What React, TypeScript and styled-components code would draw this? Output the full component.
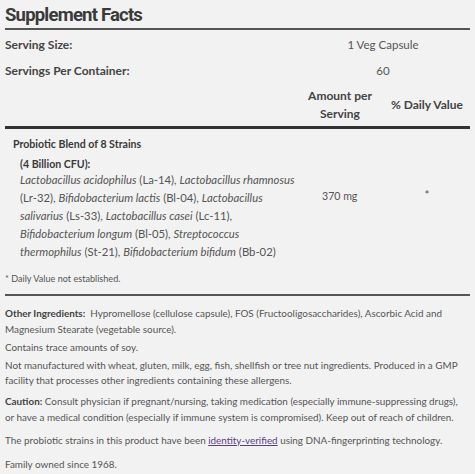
import React from 'react'
import styled, { createGlobalStyle } from 'styled-components'

const Global = createGlobalStyle`
  body {
    margin: 0;
    background: #f2f2f2;
  }
`

const App = () => {
  return (
    <Page>
      <Global />
      <Title>Supplement Facts</Title>
      <Table>
        <colgroup>
          <col />
          <col style={{ width: 88 }} />
          <col style={{ width: 86 }} />
        </colgroup>
        <tbody>
          <Row>
            <LabelCell>Serving Size:</LabelCell>
            <ValueCell colSpan={2}>1 Veg Capsule</ValueCell>
          </Row>
          <Row>
            <LabelCell>Servings Per Container:</LabelCell>
            <ValueCell colSpan={2}>60</ValueCell>
          </Row>
          <HeadRow>
            <td />
            <HeadCell>Amount per<br />Serving</HeadCell>
            <HeadCell>% Daily Value</HeadCell>
          </HeadRow>
          <BlendRow>
            <BlendCell>
              <BlendName>Probiotic Blend of 8 Strains</BlendName>
              <Cfu>(4 Billion CFU):</Cfu>
              <Strains>
                <i>Lactobacillus acidophilus</i> (La-14), <i>Lactobacillus rhamnosus</i>
                <br />
                (Lr-32), <i>Bifidobacterium lactis</i> (Bl-04), <i>Lactobacillus</i>
                <br />
                <i>salivarius</i> (Ls-33), <i>Lactobacillus casei</i> (Lc-11),
                <br />
                <i>Bifidobacterium longum</i> (Bl-05), <i>Streptococcus</i>
                <br />
                <i>thermophilus</i> (St-21), <i>Bifidobacterium bifidum</i> (Bb-02)
              </Strains>
            </BlendCell>
            <AmountCell>370 mg</AmountCell>
            <DvCell>*</DvCell>
          </BlendRow>
        </tbody>
      </Table>
      <Footnote>* Daily Value not established.</Footnote>
      <Notes>
        <Para $gap={0}>
          <b>Other Ingredients:</b>&nbsp; Hypromellose (cellulose capsule), FOS (Fructooligosaccharides), Ascorbic Acid and
          <br />
          Magnesium Stearate (vegetable source).
        </Para>
        <Para $gap={2.5}>Contains trace amounts of soy.</Para>
        <Para $gap={2.5}>
          Not manufactured with wheat, gluten, milk, egg, fish, shellfish or tree nut ingredients. Produced in a GMP
          <br />
          facility that processes other ingredients containing these allergens.
        </Para>
        <Para $gap={5.5}>
          <b>Caution:</b> Consult physician if pregnant/nursing, taking medication (especially immune-suppressing drugs),
          <br />
          or have a medical condition (especially if immune system is compromised). Keep out of reach of children.
        </Para>
        <Para $gap={8}>
          The probiotic strains in this product have been <a href="#">identity-verified</a> using DNA-fingerprinting
          technology.
        </Para>
        <Para $gap={8.5}>Family owned since 1968.</Para>
      </Notes>
    </Page>
  )
}

export default App

const Page = styled.div`
  width: 465px;
  padding: 3px 5px 0 5px;
  font-family: 'Lato', 'Liberation Sans', sans-serif;
  color: #555;
`
const Title = styled.h1`
  margin: 0;
  font-family: 'Roboto', 'Liberation Sans', sans-serif;
  font-size: 18.5px;
  font-weight: 700;
  letter-spacing: -0.8px;
  color: #3a3a3a;
  line-height: 24px;
  padding-bottom: 1px;
  border-bottom: 2px solid #555;
`
const Table = styled.table`
  width: 100%;
  table-layout: fixed;
  border-collapse: collapse;
  font-size: 11.5px;
  td {
    padding: 0;
  }
`
const Row = styled.tr`
  height: 26px;
`
const LabelCell = styled.td`
  font-size: 12px;
  font-weight: 700;
  color: #444;
  padding-top: 3px !important;
`
const ValueCell = styled.td`
  text-align: center;
  padding-top: 3px !important;
`
const HeadRow = styled.tr`
  td {
    padding: 5px 0 3px;
    border-bottom: 3px solid #333;
  }
`
const HeadCell = styled.td`
  text-align: center;
  font-size: 12px;
  font-weight: 700;
  color: #444;
  line-height: 18px;
`
const BlendRow = styled.tr`
  td {
    vertical-align: top;
  }
`
const BlendCell = styled.td`
  padding: 6px 0 0 8px !important;
  line-height: 18px;
`
const BlendName = styled.div`
  font-size: 10.6px;
  font-weight: 700;
  color: #3a3a3a;
`
const Cfu = styled.div`
  font-size: 10.6px;
  font-weight: 700;
  color: #3a3a3a;
  padding-left: 7px;
  margin-top: 2px;
`
const Strains = styled.div`
  padding-left: 7px;
  font-size: 11.3px;
  white-space: nowrap;
  margin-top: -2px;
`
const AmountCell = styled.td`
  font-size: 10.6px;
  padding-left: 26px !important;
  padding-top: 58px !important;
  line-height: 18px;
`
const DvCell = styled.td`
  text-align: center;
  padding-top: 57px !important;
  line-height: 18px;
`
const Footnote = styled.div`
  font-size: 9.1px;
  margin-top: 12px;
  padding-bottom: 10px;
  border-bottom: 2px solid #555;
`
const Notes = styled.div`
  font-size: 9.9px;
  line-height: 15.5px;
  padding-top: 10px;
  b {
    color: #444;
  }
  a {
    color: #5b3c8f;
  }
`
const Para = styled.p<{ $gap: number }>`
  margin: ${p => p.$gap}px 0 0;
  white-space: nowrap;
`
